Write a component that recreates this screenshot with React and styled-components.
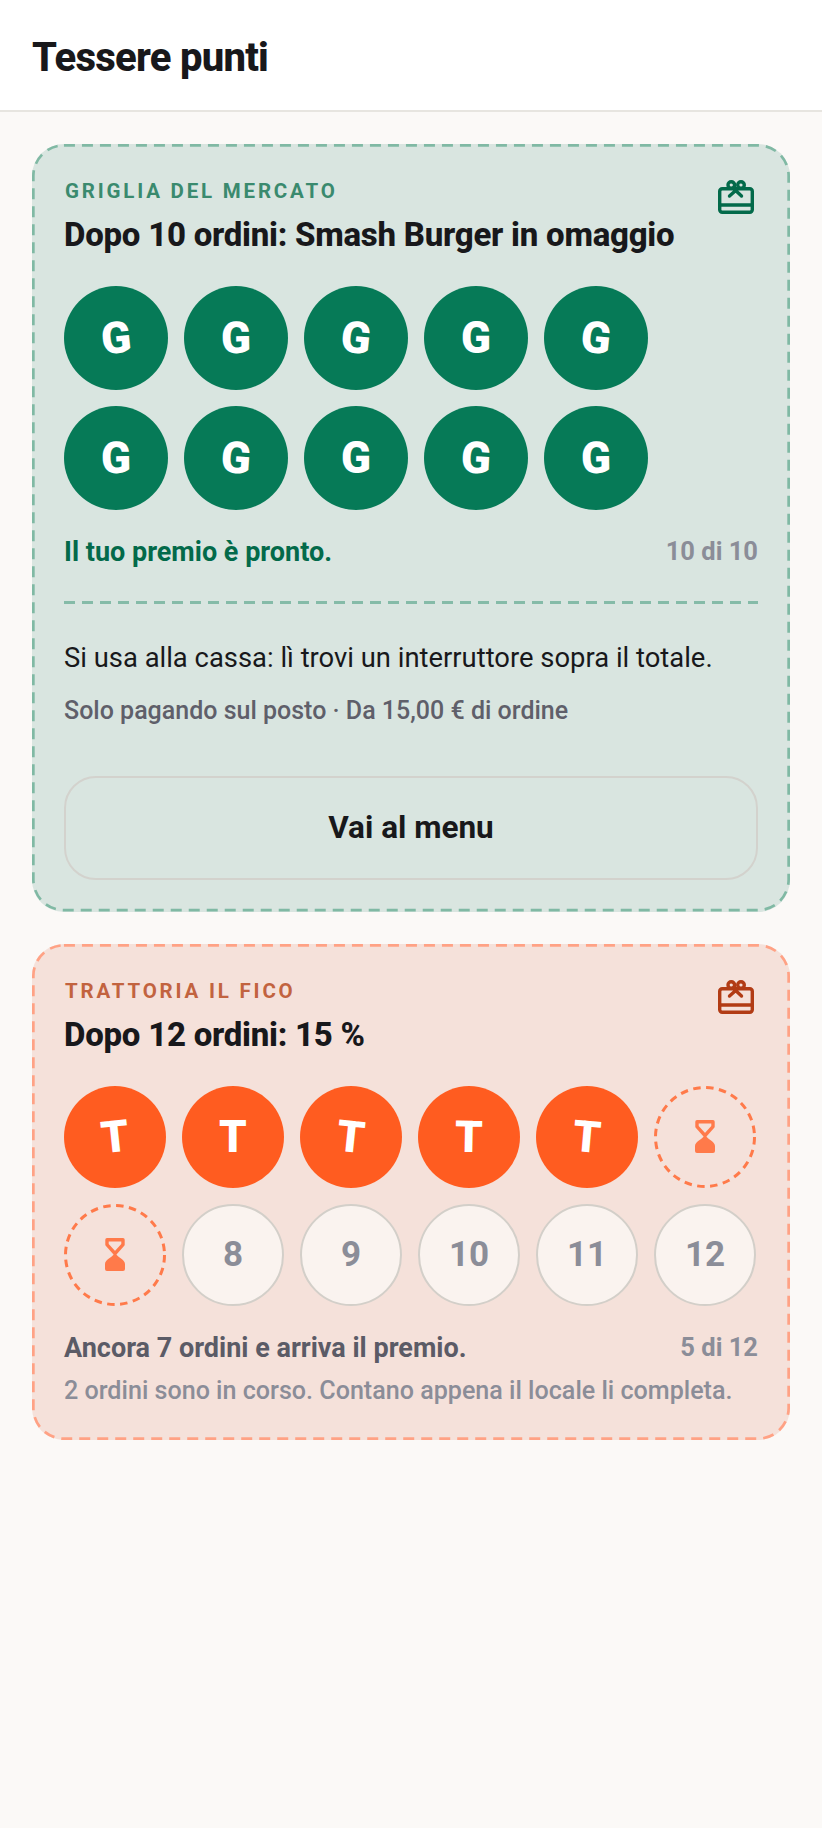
import React from "react";
import styled, { createGlobalStyle } from "styled-components";

const Global = createGlobalStyle`
  html, body { margin: 0; padding: 0; background: #fbf9f7; }
  body { font-family: Roboto, "Liberation Sans", sans-serif; color: #18181b; min-height: 1828px; }
  * { box-sizing: border-box; }
`;

const Header = styled.header`
  height: 112px;
  background: #fff;
  border-bottom: 2px solid #e7e5e0;
  padding: 5px 32px 0;
  display: flex;
  align-items: center;
`;
const Title = styled.h1`
  margin: 0;
  font-size: 40px;
  line-height: 48px;
  font-weight: 800;
  letter-spacing: -0.75px;
  color: #18181b;
`;
const Main = styled.main`
  padding: 32px;
  display: flex;
  flex-direction: column;
  gap: 32px;
`;
const Card = styled.section`
  position: relative;
  border-radius: 32px;
  background: ${(p) => p.$bg};
  padding: 35px 32px 32px;
`;
const FrameSvg = styled.svg`
  position: absolute;
  inset: 0;
  width: 100%;
  height: 100%;
  pointer-events: none;
  overflow: visible;
`;
const FrameRect = styled.rect`
  width: calc(100% - 2.7px);
  height: calc(100% - 2.7px);
  fill: none;
  stroke: ${(p) => p.$color};
  stroke-width: 2.7;
  stroke-dasharray: 11 7;
`;
const Frame = ({ color }) => (
  <FrameSvg aria-hidden="true">
    <FrameRect x="1.35" y="1.35" rx="30.6" ry="30.6" $color={color} />
  </FrameSvg>
);
const GiftSlot = styled.div`
  position: absolute;
  top: 36px;
  right: 36px;
  color: ${(p) => p.$color};
  line-height: 0;
`;
const Brand = styled.div`
  font-size: 20.5px;
  line-height: 24px;
  font-weight: 700;
  letter-spacing: 2.8px;
  padding-left: 1px;
  text-transform: uppercase;
  color: ${(p) => p.$color};
`;
const Reward = styled.h2`
  margin: 12px 0 0;
  font-size: 33px;
  line-height: 40px;
  font-weight: 800;
  letter-spacing: -0.25px;
  color: #18181b;
`;
const Stamps = styled.div`
  display: grid;
  grid-template-columns: repeat(${(p) => p.$cols}, ${(p) => p.$size});
  justify-content: start;
  gap: 16px;
  margin-top: 31px;
`;
const Stamp = styled.div`
  position: relative;
  aspect-ratio: 1;
  border-radius: 50%;
  display: flex;
  align-items: center;
  justify-content: center;
  font-size: 44px;
  font-weight: 900;
  background: ${(p) => p.$bg};
  color: #fff;
`;
const Letter = styled.span`
  display: block;
  transform: rotate(${(p) => p.$rot}deg);
`;
const PendingStamp = styled(Stamp)`
  background: transparent;
  color: #ff7a4a;
`;
const RingSvg = styled.svg`
  position: absolute;
  inset: 0;
  width: 100%;
  height: 100%;
`;
const EmptyStamp = styled(Stamp)`
  background: #faf3ef;
  border: 2px solid #d3cfc9;
  color: #8b8d98;
  font-size: 35px;
  font-weight: 700;
`;
const StatusRow = styled.div`
  display: flex;
  justify-content: space-between;
  align-items: flex-start;
  margin-top: 26px;
`;
const Status = styled.div`
  font-size: 27px;
  line-height: 32px;
  font-weight: 700;
  color: ${(p) => p.$color};
`;
const Count = styled.div`
  font-size: 25.5px;
  line-height: 30px;
  font-weight: 700;
  color: #8b8d98;
`;
const Divider = styled.div`
  margin-top: 33px;
  height: 2.5px;
  background: repeating-linear-gradient(90deg, #85bba8 0 11px, transparent 11px 18px);
`;
const Howto = styled.p`
  margin: 36px 0 0;
  font-size: 27.4px;
  line-height: 36px;
  color: #18181b;
`;
const Terms = styled.p`
  margin: 19px 0 0;
  font-size: 25px;
  line-height: 32px;
  font-weight: 500;
  color: #5f5f6a;
`;
const MenuButton = styled.button`
  display: block;
  width: 100%;
  height: 104px;
  margin-top: 49px;
  border-radius: 32px;
  border: 2px solid #d3d2cd;
  background: transparent;
  font-family: inherit;
  font-size: 31.5px;
  font-weight: 700;
  color: #18181b;
`;
const Note = styled.p`
  margin: 11px 0 1px;
  font-size: 25.1px;
  line-height: 32px;
  font-weight: 500;
  color: #8b8d98;
`;

const GiftIcon = () => (
  <svg width="36" height="34" viewBox="0 0 36 34" fill="none" stroke="currentColor" strokeWidth="3.4" strokeLinecap="round" strokeLinejoin="round">
    <rect x="1.7" y="8.7" width="32.6" height="23.6" rx="2.5" />
    <path d="M1.7 25h32.6" />
    <path d="M20.5 8 11.5 16M15 8l8.5 8" />
    <circle cx="13.3" cy="5" r="3.3" />
    <circle cx="23" cy="5" r="3.3" />
  </svg>
);

const Ring = () => (
  <RingSvg viewBox="0 0 102 102" fill="none" aria-hidden="true">
    <circle cx="51" cy="51" r="49.5" stroke="currentColor" strokeWidth="3" strokeDasharray="7.5 5.5" />
  </RingSvg>
);

const Hourglass = () => (
  <svg width="20" height="33" viewBox="0 0 20 33" fill="none">
    <path d="M2 1.7h16v5L10 15.5 2 6.700z" stroke="currentColor" strokeWidth="3.4" strokeLinejoin="round" />
    <path d="M10 14c1 5 10 7 10 12v5a2 2 0 0 1-2 2H2a2 2 0 0 1-2-2v-5c0-5 9-7 10-12z" fill="currentColor" />
  </svg>
);

const rotsG = [-6, -1, 6, 0, 6, -1, 4, 0, 3, -1];
const rotsT = [-6, 0, 6, 1, 5];

export default function App() {
  return (
    <>
      <Global />
      <Header>
        <Title>Tessere punti</Title>
      </Header>
      <Main>
        <Card $bg="#d9e5e0">
          <Frame color="#80b9a4" />
          <GiftSlot $color="#036a4a"><GiftIcon /></GiftSlot>
          <Brand $color="#3a8a6e">Griglia del Mercato</Brand>
          <Reward>Dopo 10 ordini: Smash Burger in omaggio</Reward>
          <Stamps $cols={5} $size="104px">
            {rotsG.map((r, i) => (
              <Stamp key={i} $bg="#067a57"><Letter $rot={r}>G</Letter></Stamp>
            ))}
          </Stamps>
          <StatusRow>
            <Status $color="#036a4a">Il tuo premio è pronto.</Status>
            <Count>10 di 10</Count>
          </StatusRow>
          <Divider />
          <Howto>Si usa alla cassa: lì trovi un interruttore sopra il totale.</Howto>
          <Terms>Solo pagando sul posto · Da 15,00 € di ordine</Terms>
          <MenuButton>Vai al menu</MenuButton>
        </Card>
        <Card $bg="#f5e1da">
          <Frame color="#ffa285" />
          <GiftSlot $color="#b23c15"><GiftIcon /></GiftSlot>
          <Brand $color="#c2633f">Trattoria il Fico</Brand>
          <Reward>Dopo 12 ordini: 15 %</Reward>
          <Stamps $cols={6} $size="102px">
            {rotsT.map((r, i) => (
              <Stamp key={i} $bg="#ff5c20"><Letter $rot={r}>T</Letter></Stamp>
            ))}
            <PendingStamp><Ring /><Hourglass /></PendingStamp>
            <PendingStamp><Ring /><Hourglass /></PendingStamp>
            {[8, 9, 10, 11, 12].map((n) => (
              <EmptyStamp key={n}>{n}</EmptyStamp>
            ))}
          </Stamps>
          <StatusRow>
            <Status $color="#5b5b66">Ancora 7 ordini e arriva il premio.</Status>
            <Count>5 di 12</Count>
          </StatusRow>
          <Note>2 ordini sono in corso. Contano appena il locale li completa.</Note>
        </Card>
      </Main>
    </>
  );
}
